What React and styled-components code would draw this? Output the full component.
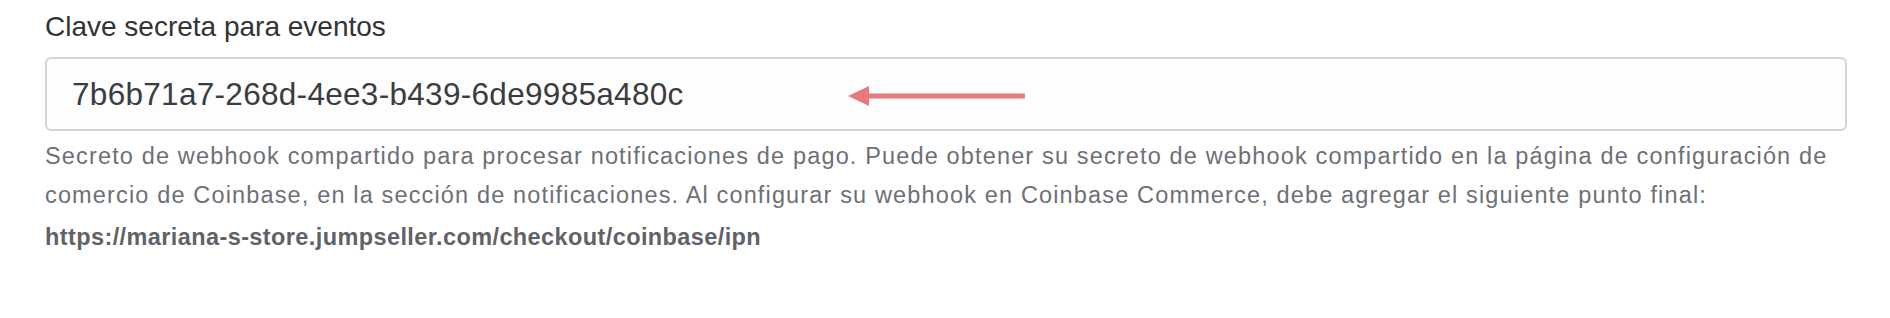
import React from 'react'
import styled, { createGlobalStyle } from 'styled-components';

const GlobalStyle = createGlobalStyle`
  html, body {
    margin: 0;
    padding: 0;
    background: #ffffff;
  }
  body {
    font-family: "Liberation Sans", Arial, sans-serif;
  }
`;

const secret = '7b6b71a7-268d-4ee3-b439-6de9985a480c';
const endpoint = 'https://mariana-s-store.jumpseller.com/checkout/coinbase/ipn';

function App() {
  return (
    <>
      <GlobalStyle />
      <Field>
        <Label htmlFor="secret">Clave secreta para eventos</Label>
        <InputWrap>
          <Input id="secret" type="text" defaultValue={secret} readOnly />
          <Arrow width="180" height="24" viewBox="0 0 180 24">
            <path d="M20 9.5 H177 V14.5 H20 Z" fill="#e8787a" />
            <path d="M0 12 L21 2 L21 22 Z" fill="#e8787a" />
          </Arrow>
        </InputWrap>
        <Help>
          Secreto de webhook compartido para procesar notificaciones de pago. Puede obtener su secreto de webhook compartido en la página de configuración de comercio de Coinbase, en la sección de notificaciones. Al configurar su webhook en Coinbase Commerce, debe agregar el siguiente punto final:
          <Endpoint>{endpoint}</Endpoint>
        </Help>
      </Field>
    </>
  )
}

const Field = styled.div`
  display: flex;
  flex-direction: column;
  padding: 10px 43px 0 45px;
`;

const Label = styled.label`
  font-size: 28px;
  line-height: 34px;
  color: #313336;
  margin-bottom: 13px;
`;

const InputWrap = styled.div`
  position: relative;
`;

const Input = styled.input`
  box-sizing: border-box;
  width: 100%;
  height: 74px;
  padding: 0 23px 0 25px;
  border: 2px solid #d2d4d6;
  border-radius: 6px;
  background: #fdfdfd;
  font-family: "Liberation Sans", Arial, sans-serif;
  font-size: 31.5px;
  letter-spacing: 0.3px;
  color: #3a3c3f;
  outline: none;
`;

const Arrow = styled.svg`
  position: absolute;
  left: 803px;
  top: 27px;
`;

const Help = styled.p`
  margin: 6px 0 0;
  font-size: 23.5px;
  letter-spacing: 1.15px;
  line-height: 39px;
  color: #6d7076;
`;

const Endpoint = styled.strong`
  display: block;
  margin-top: 3px;
  font-weight: 700;
  letter-spacing: 0.4px;
  color: #5f6368;
`;

export default App
